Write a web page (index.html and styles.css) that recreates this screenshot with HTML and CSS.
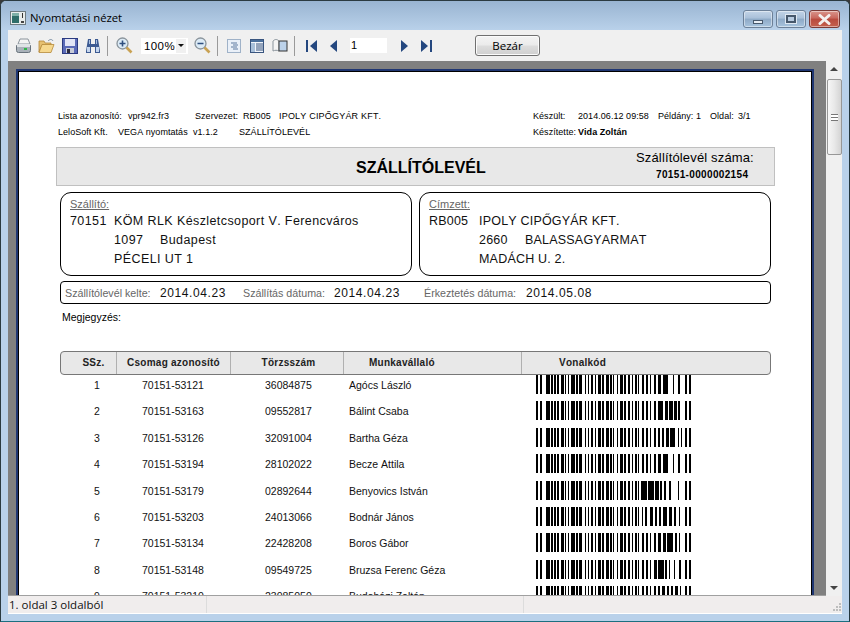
FILE: index.html
```html
<!DOCTYPE html>
<html lang="hu">
<head>
<meta charset="utf-8">
<title>Nyomtatási nézet</title>
<link rel="stylesheet" href="styles.css">
</head>
<body>
<svg class="defs" width="0" height="0">
  <defs>
    <path id="bc" d="M0 0h2v19h-2zM4 0h2v19h-2zM10 0h4v19h-4zM15 0h2v19h-2zM18 0h2v19h-2zM21 0h2v19h-2zM25 0h3v19h-3zM29 0h1v19h-1zM32 0h1v19h-1zM35 0h4v19h-4zM40 0h2v19h-2zM43 0h3v19h-3zM49 0h1v19h-1zM52 0h1v19h-1zM55 0h2v19h-2zM59 0h1v19h-1zM62 0h3v19h-3zM66 0h2v19h-2zM70 0h3v19h-3zM74 0h2v19h-2zM77 0h1v19h-1zM81 0h1v19h-1zM84 0h3v19h-3zM88 0h2v19h-2zM92 0h2v19h-2zM96 0h1v19h-1zM99 0h2v19h-2zM102 0h1v19h-1zM149 0h2v19h-2zM153 0h2v19h-2z"/>
  </defs>
</svg>
<div class="window">
  <header class="titlebar">
    <svg class="app-icon" width="16" height="14" viewBox="0 0 16 14"><rect x=".5" y=".5" width="15" height="13" fill="#e8ecec" stroke="#6d7a80"/><rect x="2" y="2" width="7" height="10" fill="#2f6d6a"/><rect x="2" y="2" width="7" height="3" fill="#7fb0a8"/><rect x="12" y="2" width="1" height="5" fill="#333"/><rect x="11" y="10" width="3" height="2" fill="#444"/></svg>
    <span class="title">Nyomtatási nézet</span>
    <div class="controls">
      <div class="ctl"><span class="g-min"></span></div>
      <div class="ctl"><span class="g-max"></span></div>
      <div class="ctl ctl-close"><svg width="13" height="11" viewBox="0 0 13 11"><path d="M2 1.500l9 8M11 1.500l-9 8" stroke="#f4f0f0" stroke-width="3" stroke-linecap="round"/></svg></div>
    </div>
  </header>

  <div class="client">
    <nav class="toolbar">
      <svg class="ic ic-print" width="17" height="16" viewBox="0 0 17 16"><path d="M5 1h8l2 5H3z" fill="#f4f4f4" stroke="#8b949c"/><path d="M1.500 7.500h14v5a2 2 0 0 1-2 2h-10a2 2 0 0 1-2-2z" fill="#a9b1b9" stroke="#68727c"/><rect x="2" y="6" width="13" height="3" fill="#dfe3e6"/><rect x="9" y="10" width="3" height="2" fill="#2fb84a"/></svg>
      <svg class="ic ic-open" width="17" height="16" viewBox="0 0 17 16"><path d="M1 14V3h5l1 2h6v2H4l-3 7z" fill="#e6c071" stroke="#b5893a" stroke-width=".8"/><path d="M1 14.500l3-8h12l-3 8z" fill="#f6d88e" stroke="#b5893a" stroke-width=".8"/><path d="M10 3c2-2 4-2 5 0" fill="none" stroke="#7a8fa5"/></svg>
      <svg class="ic ic-save" width="16" height="16" viewBox="0 0 16 16"><rect x=".5" y=".5" width="15" height="15" fill="#5a6ab8" stroke="#2b3a80"/><rect x="3" y="1" width="10" height="7" fill="#e2e5f6"/><rect x="4" y="10" width="8" height="5" fill="#c8ccd8"/><rect x="5" y="11" width="3" height="4" fill="#2b2b40"/></svg>
      <svg class="ic ic-find" width="16" height="16" viewBox="0 0 16 16"><path d="M3 1h3v5h4V1h3l2 12v2h-5V9H6v6H1v-2z" fill="#3c5a92"/><rect x="2" y="9" width="3" height="5" fill="#c5d6ee"/><rect x="11" y="9" width="3" height="5" fill="#c5d6ee"/><rect x="4" y="2" width="1" height="4" fill="#a9c0e0"/><rect x="11" y="2" width="1" height="4" fill="#a9c0e0"/></svg>
      <span class="sep sep-a"></span>
      <svg class="ic ic-zin" width="17" height="17" viewBox="0 0 17 17"><circle cx="6.500" cy="6.500" r="5.500" fill="#dcebf6" stroke="#8a949c" stroke-width="1.300"/><path d="M10.500 10.500l5 5" stroke="#c9a253" stroke-width="2.600"/><path d="M3.500 6.500h6M6.500 3.500v6" stroke="#2f4f7f" stroke-width="1.600"/></svg>
      <div class="combo"><span class="combo-val">100%</span><span class="combo-btn"><i class="tri"></i></span></div>
      <svg class="ic ic-zout" width="17" height="17" viewBox="0 0 17 17"><circle cx="6.500" cy="6.500" r="5.500" fill="#dcebf6" stroke="#8a949c" stroke-width="1.300"/><path d="M10.500 10.500l5 5" stroke="#c9a253" stroke-width="2.600"/><path d="M3.500 6.500h6" stroke="#2f4f7f" stroke-width="1.600"/></svg>
      <span class="sep sep-b"></span>
      <svg class="ic ic-doc1" width="14" height="14" viewBox="0 0 14 14"><rect x=".5" y=".5" width="13" height="13" fill="#eaf0f8" stroke="#9fb2c8"/><path d="M4 4h6M6 6h5M4 8h6M6 10h5" stroke="#5f7aa0"/></svg>
      <svg class="ic ic-doc2" width="14" height="14" viewBox="0 0 14 14"><rect x=".5" y=".5" width="13" height="13" fill="#f0f4fa" stroke="#39557f"/><rect x="1" y="1" width="12" height="2" fill="#4a6f9c"/><rect x="1" y="4" width="4" height="9" fill="#a8c0da"/><path d="M6 5h7M6 7h7M6 9h7M6 11h7" stroke="#39557f"/></svg>
      <svg class="ic ic-book" width="16" height="14" viewBox="0 0 16 14"><path d="M1 12V2c2-2 4-2 6 0v10c-2-1-4-1-6 0z" fill="#f4f4f4" stroke="#8a949c"/><rect x="7" y="2" width="8" height="10" fill="#bcd2ea" stroke="#333"/></svg>
      <span class="sep sep-c"></span>
      <svg class="ic ic-first" width="11" height="12" viewBox="0 0 11 12"><rect width="2" height="12" fill="#24477f"/><path d="M11 0v12L4 6z" fill="#24477f"/></svg>
      <svg class="ic ic-prev" width="7" height="12" viewBox="0 0 7 12"><path d="M7 0v12L0 6z" fill="#24477f"/></svg>
      <div class="pagebox">1</div>
      <svg class="ic ic-next" width="7" height="12" viewBox="0 0 7 12"><path d="M0 0v12l7-6z" fill="#24477f"/></svg>
      <svg class="ic ic-last" width="11" height="12" viewBox="0 0 11 12"><path d="M0 0v12l7-6z" fill="#24477f"/><rect x="9" width="2" height="12" fill="#24477f"/></svg>
      <button class="close-btn">Bezár</button>
    </nav>

    <div class="viewer">
      <div class="canvas">
        <div class="sheet">
          <div class="page">
            <div class="meta">
              <span class="m-a">Lista azonosító:</span><span class="m-b">vpr942.fr3</span><span class="m-c">Szervezet:</span><span class="m-d">RB005</span><span class="m-e">IPOLY CIPŐGYÁR KFT.</span><span class="m-f">Készült:</span><span class="m-g">2014.06.12 09:58</span><span class="m-h">Példány: 1</span><span class="m-i">Oldal:</span><span>3/1</span>
            </div>
            <div class="meta">
              <span class="m-a2">LeloSoft Kft.</span><span class="m-j">VEGA nyomtatás</span><span class="m-k">v1.1.2</span><span class="m-l">SZÁLLÍTÓLEVÉL</span><span class="m-f2">Készítette:</span><b>Vida Zoltán</b>
            </div>
            <div class="band">
              <div class="band-title">SZÁLLÍTÓLEVÉL</div>
              <div class="band-num">
                <div class="num-label">Szállítólevél száma:</div>
                <div class="num-val">70151-0000002154</div>
              </div>
            </div>
            <div class="parties">
              <section class="party">
                <div class="party-label">Szállító:</div>
                <div class="party-grid">
                  <span>70151</span><span>KÖM RLK Készletcsoport V. Ferencváros</span>
                  <span></span><span><span class="zip">1097</span>Budapest</span>
                  <span></span><span>PÉCELI UT 1</span>
                </div>
              </section>
              <section class="party party-to">
                <div class="party-label">Címzett:</div>
                <div class="party-grid">
                  <span>RB005</span><span>IPOLY CIPŐGYÁR KFT.</span>
                  <span></span><span><span class="zip">2660</span>BALASSAGYARMAT</span>
                  <span></span><span>MADÁCH U. 2.</span>
                </div>
              </section>
            </div>
            <div class="dates">
              <span class="d-l1">Szállítólevél kelte:</span><span class="d-v d-v1">2014.04.23</span>
              <span class="d-l2">Szállítás dátuma:</span><span class="d-v d-v2">2014.04.23</span>
              <span class="d-l3">Érkeztetés dátuma:</span><span class="d-v">2014.05.08</span>
            </div>
            <div class="note">Megjegyzés:</div>
            <div class="thead">
              <div class="th th-1">SSz.</div>
              <div class="th th-2">Csomag azonosító</div>
              <div class="th th-3">Törzsszám</div>
              <div class="th th-4">Munkavállaló</div>
              <div class="th th-5">Vonalkód</div>
            </div>
            <div class="rows">
              <div class="row"><span class="c-n">1</span><span class="c-c">70151-53121</span><span class="c-t">36084875</span><span class="c-w">Agócs László</span><svg class="bar" width="155" height="19" viewBox="0 0 155 19"><use href="#bc"/><path d="M106 0h2v19h-2zM110 0h2v19h-2zM114 0h1v19h-1zM118 0h2v19h-2zM122 0h3v19h-3zM127 0h5v19h-5zM137 0h1v19h-1zM142 0h2v19h-2z"/></svg></div>
              <div class="row"><span class="c-n">2</span><span class="c-c">70151-53163</span><span class="c-t">09552817</span><span class="c-w">Bálint Csaba</span><svg class="bar" width="155" height="19" viewBox="0 0 155 19"><use href="#bc"/><path d="M106 0h2v19h-2zM110 0h2v19h-2zM114 0h1v19h-1zM118 0h2v19h-2zM122 0h5v19h-5zM129 0h3v19h-3zM133 0h4v19h-4zM138 0h3v19h-3zM142 0h2v19h-2z"/></svg></div>
              <div class="row"><span class="c-n">3</span><span class="c-c">70151-53126</span><span class="c-t">32091004</span><span class="c-w">Bartha Géza</span><svg class="bar" width="155" height="19" viewBox="0 0 155 19"><use href="#bc"/><path d="M106 0h2v19h-2zM110 0h2v19h-2zM114 0h1v19h-1zM118 0h2v19h-2zM122 0h2v19h-2zM126 0h2v19h-2zM130 0h3v19h-3zM134 0h5v19h-5zM142 0h1v19h-1zM145 0h1v19h-1z"/></svg></div>
              <div class="row"><span class="c-n">4</span><span class="c-c">70151-53194</span><span class="c-t">28102022</span><span class="c-w">Becze Attila</span><svg class="bar" width="155" height="19" viewBox="0 0 155 19"><use href="#bc"/><path d="M106 0h2v19h-2zM110 0h2v19h-2zM114 0h1v19h-1zM118 0h2v19h-2zM122 0h3v19h-3zM127 0h5v19h-5zM137 0h1v19h-1zM142 0h2v19h-2z"/></svg></div>
              <div class="row"><span class="c-n">5</span><span class="c-c">70151-53179</span><span class="c-t">02892644</span><span class="c-w">Benyovics István</span><svg class="bar" width="155" height="19" viewBox="0 0 155 19"><use href="#bc"/><path d="M105 0h6v19h-6zM112 0h6v19h-6zM119 0h4v19h-4zM124 0h2v19h-2zM128 0h2v19h-2zM133 0h2v19h-2zM142 0h1v19h-1z"/></svg></div>
              <div class="row"><span class="c-n">6</span><span class="c-c">70151-53203</span><span class="c-t">24013066</span><span class="c-w">Bodnár János</span><svg class="bar" width="155" height="19" viewBox="0 0 155 19"><use href="#bc"/><path d="M106 0h1v19h-1zM109 0h2v19h-2zM114 0h3v19h-3zM119 0h2v19h-2zM123 0h2v19h-2zM127 0h4v19h-4zM133 0h3v19h-3zM138 0h2v19h-2zM143 0h1v19h-1z"/></svg></div>
              <div class="row"><span class="c-n">7</span><span class="c-c">70151-53134</span><span class="c-t">22428208</span><span class="c-w">Boros Gábor</span><svg class="bar" width="155" height="19" viewBox="0 0 155 19"><use href="#bc"/><path d="M106 0h2v19h-2zM110 0h2v19h-2zM114 0h1v19h-1zM118 0h2v19h-2zM122 0h3v19h-3zM127 0h3v19h-3zM131 0h6v19h-6zM139 0h2v19h-2zM143 0h1v19h-1z"/></svg></div>
              <div class="row"><span class="c-n">8</span><span class="c-c">70151-53148</span><span class="c-t">09549725</span><span class="c-w">Bruzsa Ferenc Géza</span><svg class="bar" width="155" height="19" viewBox="0 0 155 19"><use href="#bc"/><path d="M106 0h2v19h-2zM110 0h2v19h-2zM114 0h1v19h-1zM118 0h3v19h-3zM122 0h6v19h-6zM129 0h2v19h-2zM133 0h1v19h-1zM138 0h1v19h-1zM143 0h2v19h-2z"/></svg></div>
              <div class="row"><span class="c-n">9</span><span class="c-c">70151-53210</span><span class="c-t">23085050</span><span class="c-w">Budaházi Zoltán</span><svg class="bar" width="155" height="19" viewBox="0 0 155 19"><use href="#bc"/><path d="M106 0h2v19h-2zM110 0h2v19h-2zM114 0h1v19h-1zM118 0h2v19h-2zM122 0h2v19h-2zM126 0h3v19h-3zM131 0h2v19h-2zM135 0h2v19h-2zM139 0h3v19h-3zM144 0h1v19h-1z"/></svg></div>
            </div>
          </div>
        </div>
      </div>
      <aside class="scrollbar">
        <i class="arrow-up"></i>
        <div class="thumb"><span class="grip"></span></div>
        <i class="arrow-down"></i>
      </aside>
    </div>

    <footer class="status">
      <div class="st st-1">1. oldal 3 oldalból</div>
      <div class="st st-2"></div>
      <div class="st st-3">
        <svg class="resize" width="11" height="11" viewBox="0 0 11 11"><path d="M8 1h2v2H8zM5 4h2v2H5zM8 4h2v2H8zM2 7h2v2H2zM5 7h2v2H5zM8 7h2v2H8z" fill="#bdbdbd"/></svg>
      </div>
    </footer>
  </div>
</div>
</body>
</html>
```
FILE: styles.css
```css
* { box-sizing: border-box; }
html, body { margin: 0; padding: 0; }
body { width: 850px; height: 622px; overflow: hidden; background: #3a3a3a; font-family: "Liberation Sans", Arial, sans-serif; font-kerning: none; color: #000; }
.defs { position: absolute; }

.window {
  width: 850px; height: 622px; display: flex; flex-direction: column;
  background: #b9d1ea; border: 1px solid #2b3a40; border-bottom-color: #1c6f80; border-right-color: #22363e;
  border-radius: 6px 6px 0 0; overflow: hidden;
}
.titlebar {
  height: 29px; flex: none; display: flex; align-items: center; padding: 0 9px 0 9px;
  background: linear-gradient(#99b4d1, #b9d1ea);
}
.app-icon { flex: none; margin-top: 4px; }
.title { margin-left: 4px; margin-top: 4px; font: 11.300px "Open Sans", sans-serif; color: #000; }
.controls { margin-left: auto; display: flex; gap: 3px; align-self: flex-start; margin-top: 9px; }
.ctl {
  width: 30px; height: 18px; border: 1px solid #6c8098; border-radius: 3px;
  background: linear-gradient(#c3d4e7 0, #a9c0d9 45%, #8ea9c6 50%, #a8c4de 100%);
  display: flex; align-items: center; justify-content: center; box-shadow: inset 0 0 0 1px rgba(255,255,255,.45);
}
.ctl-close { width: 31px; background: linear-gradient(#d8958c 0, #c9675c 45%, #b84a3e 50%, #c4604e 100%); border-color: #7a3a36; }
.g-min { width: 10px; height: 4px; margin-top: 5px; background: #e8eef5; border: 1px solid #47586c; }
.g-max { width: 10px; height: 8px; background: #b8cbe0; border: 2px solid #47586c; outline: 1px solid #dfe8f2; }

.client { flex: 1; min-height: 0; margin: 0 7px; display: flex; flex-direction: column; margin-bottom: 7px; }
.toolbar { height: 31px; flex: none; display: flex; align-items: center; background: #f0f0f0; position: relative; }
.ic { flex: none; }
.ic-print { margin-left: 7px; }
.ic-open { margin-left: 6px; }
.ic-save { margin-left: 7px; }
.ic-find { margin-left: 7px; }
.sep { flex: none; width: 1px; height: 20px; background: #9a9a9a; }
.sep-a { margin-left: 6px; }
.ic-zin { margin-left: 8px; }
.combo { flex: none; width: 47px; height: 16px; margin-left: 8px; background: #fff; display: flex; }
.combo-val { width: 35px; padding-left: 3px; font-size: 11.500px; line-height: 17px; letter-spacing: .4px; }
.combo-btn { width: 10px; height: 14px; margin-top: 1px; background: #f0f0f0; display: flex; align-items: center; justify-content: center; }
.tri { width: 0; height: 0; border: 3px solid transparent; border-top: 3px solid #111; border-bottom: 0; }
.ic-zout { margin-left: 6px; }
.sep-b { margin-left: 6px; }
.ic-doc1 { margin-left: 9px; }
.ic-doc2 { margin-left: 9px; }
.ic-book { margin-left: 8px; }
.sep-c { margin-left: 6px; }
.ic-first { margin-left: 11px; }
.ic-prev { margin-left: 13px; }
.pagebox { flex: none; width: 37px; height: 15px; margin-left: 13px; background: #fff; font-size: 11px; line-height: 15px; padding-left: 1px; }
.ic-next { margin-left: 14px; }
.ic-last { margin-left: 13px; }
.close-btn {
  flex: none; width: 65px; height: 21px; margin-left: 43px; padding: 0; border: 1px solid #707070; border-radius: 3px;
  background: linear-gradient(#f4f4f4 0, #ebebeb 48%, #dddddd 52%, #cfcfcf 100%);
  font: 11.500px "Open Sans", sans-serif; color: #000; box-shadow: inset 0 0 0 1px #fbfbfb;
}

.viewer { flex: 1; min-height: 0; display: flex; }
.canvas { flex: 1; min-width: 0; overflow: hidden; background: #808080; padding: 8px 12px 0 8px; border-bottom: 1px solid #a0a0a0; }
.sheet { border: 2px solid #1f3672; width: 798px; }
.page { border: 1px solid #000; background: #fff; height: 800px; padding: 36px 0 0 37px; }

.scrollbar { flex: none; width: 16px; background: #f0f0f0; position: relative; border-left: 0; }
.arrow-up, .arrow-down { position: absolute; left: 4px; width: 0; height: 0; border: 4px solid transparent; }
.arrow-up { top: 6px; border-top: 0; border-bottom: 4px solid #444; }
.arrow-down { bottom: 6px; border-bottom: 0; border-top: 4px solid #444; }
.thumb {
  position: absolute; top: 18px; left: 1px; width: 15px; height: 76px; border: 1px solid #979797; border-radius: 2px;
  background: linear-gradient(to right, #f6f6f6, #e8e8e8 50%, #d4d4d4); display: flex; align-items: center; justify-content: center;
}
.grip { width: 7px; height: 7px; border-top: 1px solid #777; border-bottom: 1px solid #777; background: linear-gradient(#fff 0 2px, #777 2px 3px, #fff 3px); }

.status { height: 18px; flex: none; display: flex; background: #f0eded; border-bottom: 1px solid #fff; font: 11.500px "Open Sans", sans-serif; color: #111; }
.st { line-height: 18px; height: 17px; }
.st-1 { width: 199px; padding-left: 1px; border-right: 1px solid #dcdcdc; }
.st-2 { width: 317px; border-right: 1px solid #dcdcdc; }
.st-3 { flex: 1; display: flex; justify-content: flex-end; align-items: flex-end; }

.meta { height: 16px; display: flex; align-items: center; padding-left: 2px; font-size: 9px; letter-spacing: .05px; white-space: nowrap; }
.m-a { width: 70px; }
.m-a2 { width: 60px; }
.m-b { width: 67px; }
.m-c { width: 48px; }
.m-d { width: 36px; }
.m-e { width: 254px; letter-spacing: .2px; }
.m-f { width: 45px; }
.m-g { width: 80px; }
.m-h { width: 52px; }
.m-i { width: 28px; }
.m-j { width: 75px; }
.m-k { width: 46px; }
.m-l { width: 294px; }
.m-f2 { width: 45px; }

.band { height: 39px; margin-top: 7px; width: 719px; display: flex; background: #e8e8e8; border: 1px solid #c0c0c0; }
.band-title { width: 579px; padding-left: 299px; font-size: 16px; font-weight: bold; line-height: 39px; white-space: nowrap; }
.band-num { flex: 1; white-space: nowrap; }
.num-label { font-size: 13px; line-height: 18px; margin-top: 1px; letter-spacing: .15px; }
.num-val { font-size: 10px; font-weight: bold; line-height: 16px; padding-left: 20px; letter-spacing: .35px; }

.parties { display: flex; gap: 7px; margin: 6px 0 0 4px; }
.party { width: 352px; height: 84px; border: 1px solid #000; border-radius: 11px; padding: 3px 9px 0; }
.party-label { font-size: 11px; line-height: 16px; color: #666; text-decoration: underline; }
.party-grid { display: grid; grid-template-columns: 44px 1fr; font-size: 12.500px; line-height: 19px; letter-spacing: .4px; color: #111; }
.party-to .party-grid { grid-template-columns: 50px 1fr; font-size: 12.500px; letter-spacing: .2px; }
.zip { display: inline-block; width: 46px; }

.dates { margin: 5px 0 0 4px; width: 711px; height: 23px; display: flex; align-items: center; border: 1px solid #000; border-radius: 4px; padding-left: 4px; font-size: 10.700px; color: #666; white-space: nowrap; }
.d-l1 { width: 95px; }
.d-v { font-size: 12px; letter-spacing: .6px; color: #111; }
.d-v1 { width: 83px; }
.d-l2 { width: 91px; }
.d-v2 { width: 90px; }
.d-l3 { width: 102px; }

.note { margin: 5px 0 0 6px; font-size: 10.500px; line-height: 16px; height: 16px; }

.thead { margin: 26px 0 0 4px; width: 711px; height: 24px; display: flex; background: #e8e8e8; border: 1px solid #777; border-radius: 4px; font-size: 10px; font-weight: bold; color: #222; letter-spacing: .25px; }
.th { line-height: 21px; height: 22px; white-space: nowrap; border-right: 1px solid #b0b0b0; text-align: center; }
.th-1 { width: 56px; padding-left: 10px; }
.th-2 { width: 114px; }
.th-3 { width: 113px; padding-left: 3px; }
.th-4 { width: 178px; text-align: left; padding-left: 25px; }
.th-5 { flex: 1; border-right: 0; text-align: left; padding-left: 37px; }

.rows { margin-left: 4px; display: grid; grid-auto-rows: 26.400px; }
.row { display: flex; font-size: 10.500px; line-height: 20px; white-space: nowrap; color: #111; }
.c-n { width: 74px; text-align: center; padding-left: 0; }
.c-c { width: 88px; margin-left: 0; padding-left: 8px; }
.c-t { width: 84px; margin-left: 43px; padding-left: 0; }
.c-w { width: 187px; }
.bar { flex: none; display: block; }
```
